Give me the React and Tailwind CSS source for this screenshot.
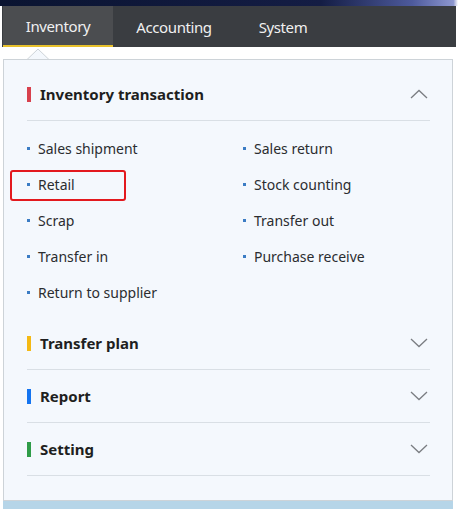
import React from "react";

const FONT = { fontFamily: '"Noto Sans", "Open Sans", Arial, sans-serif' };

function Chevron({ up }) {
  return (
    <svg width="18" height="10" viewBox="0 0 18 10" className="block">
      <path
        d={up ? "M1 9 L9 1.5 L17 9" : "M1 1 L9 8.5 L17 1"}
        fill="none"
        stroke="#7a7d82"
        strokeWidth="1.3"
      />
    </svg>
  );
}

function Heading({ color, title, up }) {
  return (
    <div className="h-[53px] flex items-center border-b border-[#d9dfe5]">
      <span className={`w-[4px] h-[15px] ${color}`} />
      <span className="ml-[9px] text-[15px] font-bold text-[#1e1f21] leading-none">{title}</span>
      <span className="ml-auto mr-[2px]">
        <Chevron up={up} />
      </span>
    </div>
  );
}

function Item({ label, boxed }) {
  return (
    <div className="relative h-[36px] flex items-center">
      <span className="w-[3px] h-[3px] bg-[#3b7cc4]" />
      <span className="ml-[8px] text-[14px] text-[#2b2d30]">{label}</span>
      {boxed && (
        <span className="absolute left-[-17px] top-[4px] w-[116px] h-[31px] border-2 border-[#e3191e] rounded-[3px]" />
      )}
    </div>
  );
}

export default function App() {
  const left = ["Sales shipment", "Retail", "Scrap", "Transfer in", "Return to supplier"];
  const right = ["Sales return", "Stock counting", "Transfer out", "Purchase receive"];
  return (
    <div className="w-[458px] h-[511px] bg-white relative overflow-hidden" style={FONT}>
      <div className="h-[6px] bg-[linear-gradient(to_right,#0a1431_0%,#141d44_70%,#4d5a9c_90%,#8d97cf_99%,#ffffff_100%)]" />
      <div className="ml-[2px] w-[454px] h-[41px] bg-[#3a3d41] flex text-[15px] tracking-[-0.4px] text-[#f0f0f0]">
        <div className="ml-[1px] w-[110px] pt-[2px] bg-[#4b4d50] border-b-2 border-[#e8c12c] flex items-center justify-center">
          Inventory
        </div>
        <div className="w-[122px] pt-[2px] flex items-center justify-center">Accounting</div>
        <div className="w-[96px] pt-[2px] flex items-center justify-center">System</div>
      </div>
      <div className="h-[12px] relative">
        <svg className="absolute left-[26px] top-[1px]" width="26" height="13" viewBox="0 0 26 13">
          <polygon points="0,12.5 12,1 24,12.5" fill="#f4f8fd" stroke="#cdd3d8" strokeWidth="1" />
          <rect x="0" y="12" width="26" height="2" fill="#f4f8fd" />
        </svg>
      </div>
      <div className="ml-[3px] w-[450px] border border-[#cdd3d8] bg-[#f4f8fd] pl-[23px] pr-[22px] pt-[8px] pb-[24px] relative">
        <Heading color="bg-[#d8414d]" title="Inventory transaction" up />
        <div className="grid grid-cols-[216px_1fr] pt-[9px] pb-[7px]">
          <div>
            {left.map((l) => (
              <Item key={l} label={l} boxed={l === "Retail"} />
            ))}
          </div>
          <div>
            {right.map((l) => (
              <Item key={l} label={l} />
            ))}
          </div>
        </div>
        <Heading color="bg-[#f4b914]" title="Transfer plan" />
        <Heading color="bg-[#1474f0]" title="Report" />
        <Heading color="bg-[#2f9c48]" title="Setting" />
      </div>
      <div className="ml-[3px] w-[450px] h-[8px] bg-[#b6d5e8]" />
    </div>
  );
}
